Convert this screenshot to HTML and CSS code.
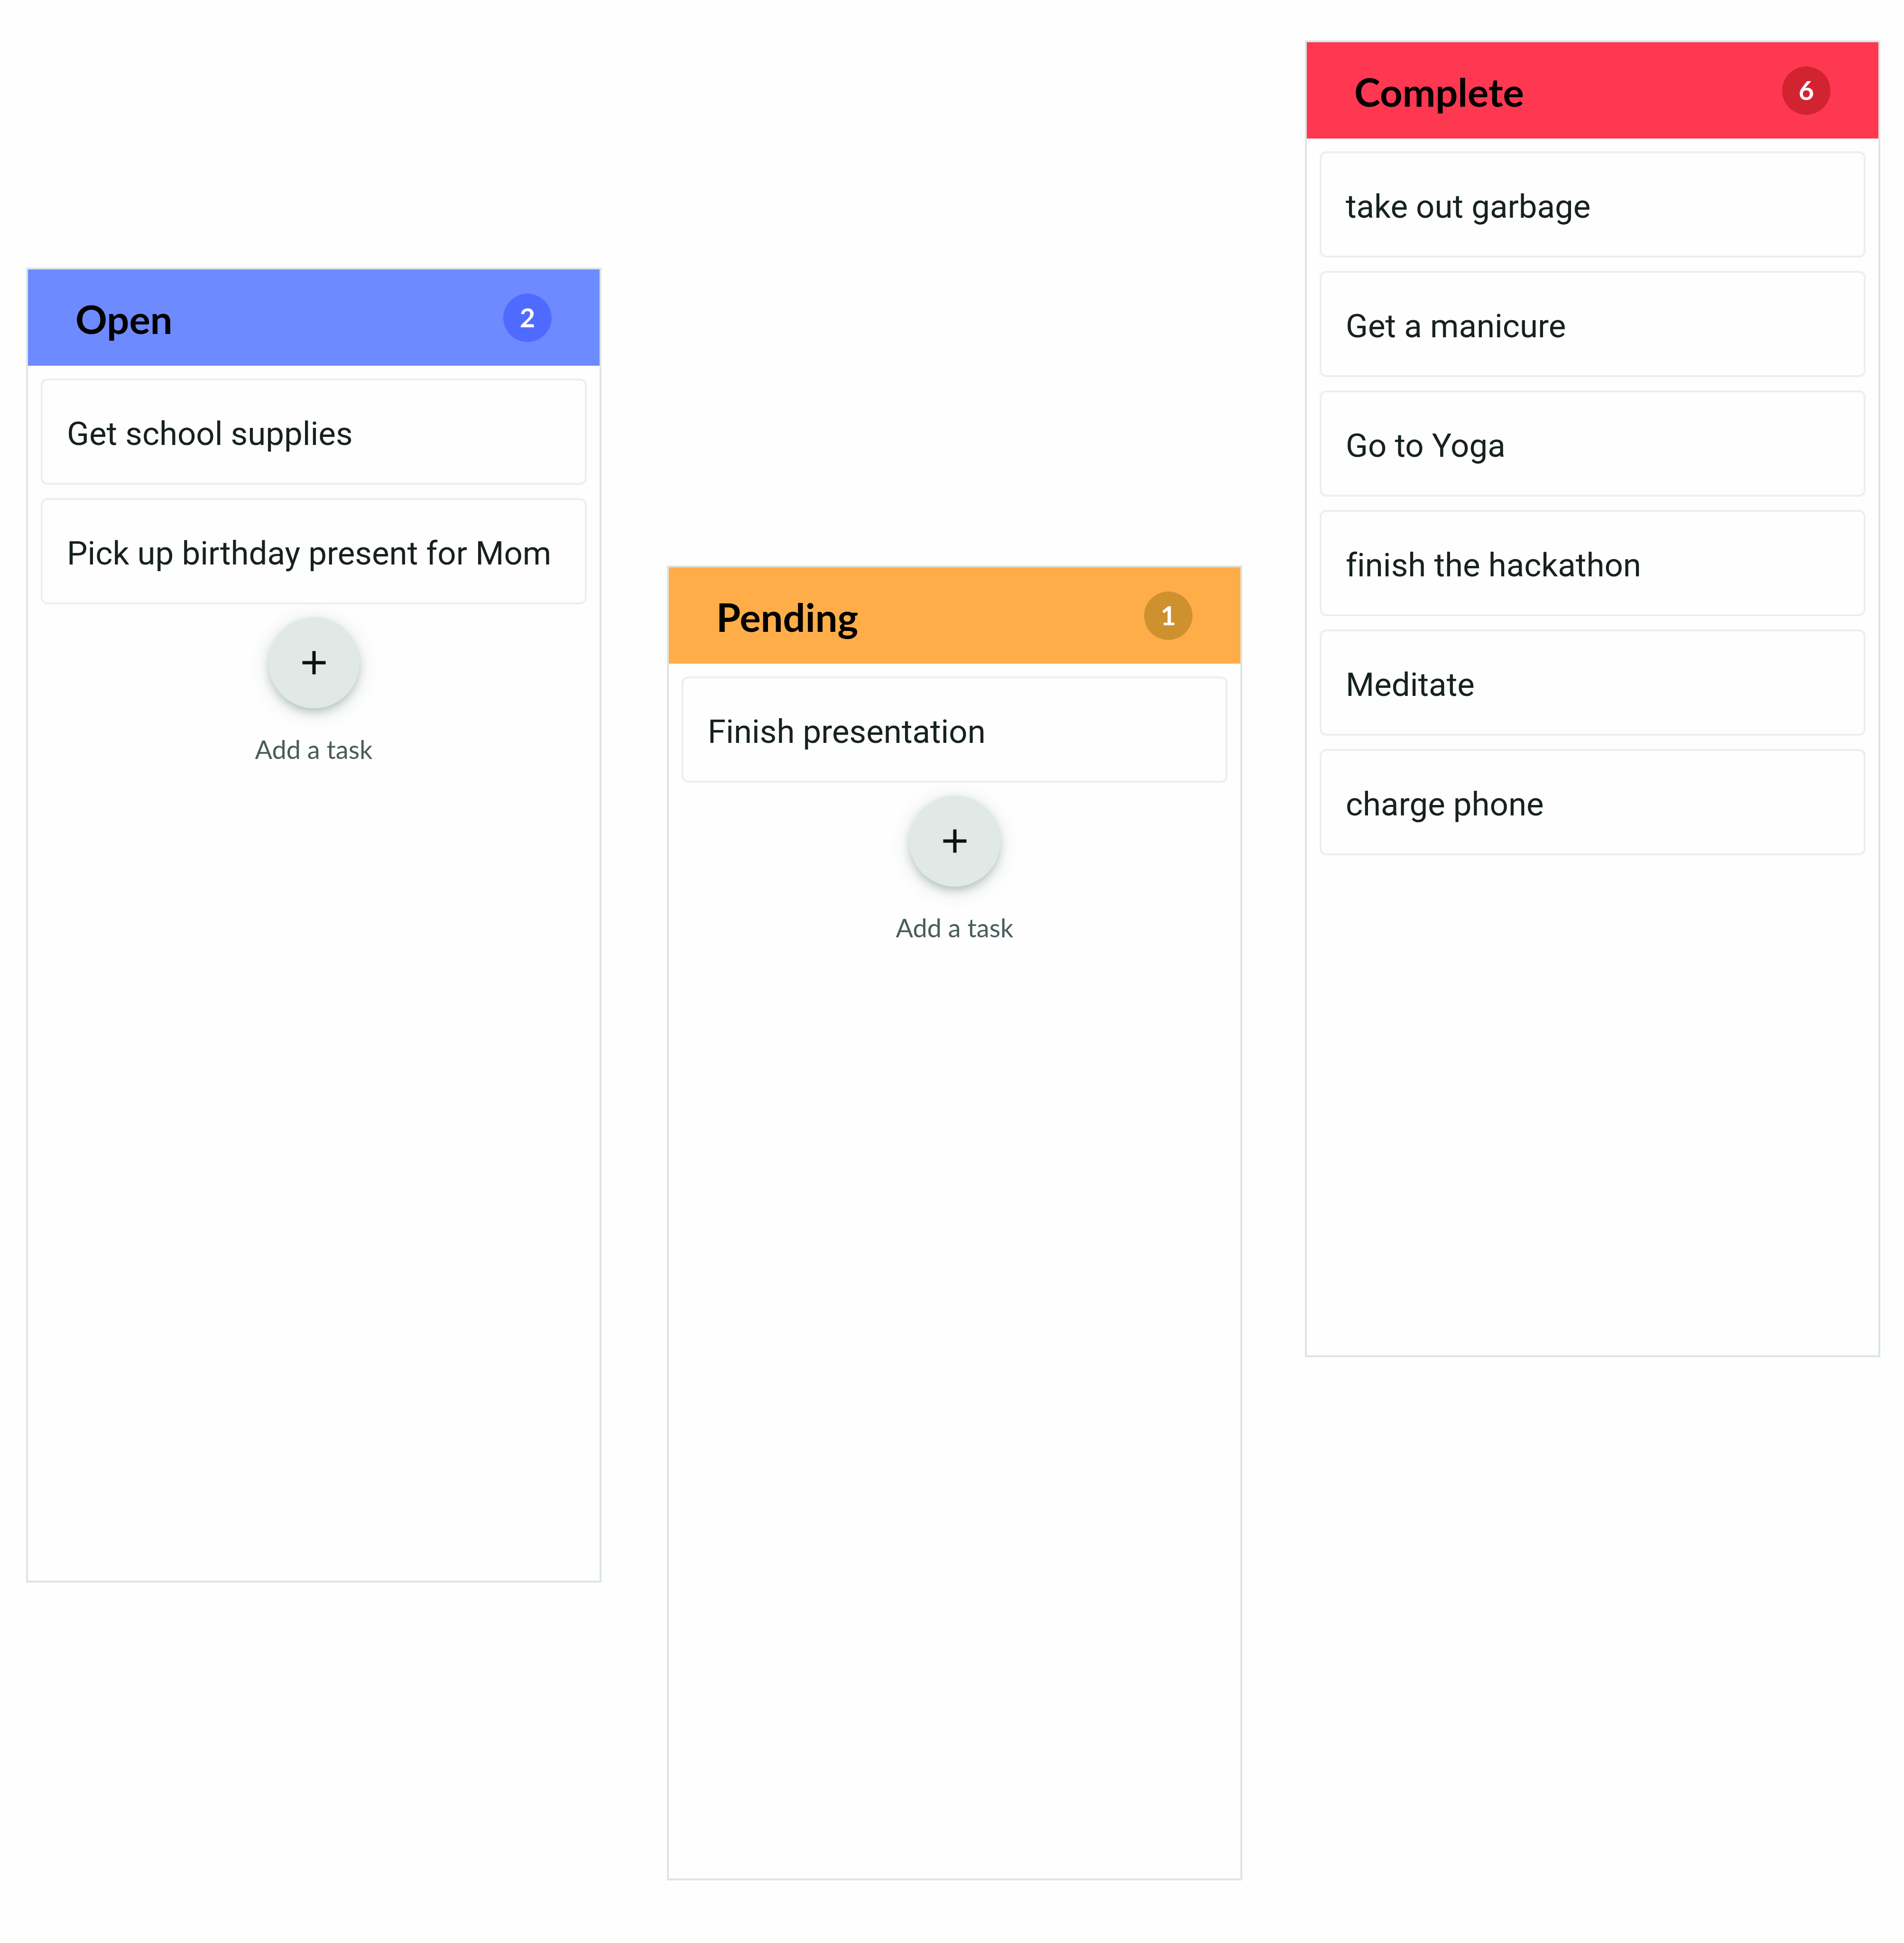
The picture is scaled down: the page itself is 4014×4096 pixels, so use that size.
FILE: index.html
```html
<!DOCTYPE html>
<html lang="en">
<head>
  <meta charset="utf-8">
  <title>Task board</title>
  <link rel="stylesheet" href="styles.css">
</head>
<body>
  <main class="board">
    <section class="column column--open">
      <header class="column__header">
        <h2 class="column__title">Open</h2>
        <span class="column__count">2</span>
      </header>
      <div class="column__body">
        <ul class="tasks">
          <li class="task">Get school supplies</li>
          <li class="task">Pick up birthday present for Mom</li>
        </ul>
        <div class="add">
          <button class="add__button" id="add-open" type="button">
            <svg class="add__icon" viewBox="0 0 24 24" aria-hidden="true"><path d="M19 13h-6v6h-2v-6H5v-2h6V5h2v6h6v2z"/></svg>
          </button>
          <label class="add__label" for="add-open">Add a task</label>
        </div>
      </div>
    </section>

    <section class="column column--pending">
      <header class="column__header">
        <h2 class="column__title">Pending</h2>
        <span class="column__count">1</span>
      </header>
      <div class="column__body">
        <ul class="tasks">
          <li class="task">Finish presentation</li>
        </ul>
        <div class="add">
          <button class="add__button" id="add-pending" type="button">
            <svg class="add__icon" viewBox="0 0 24 24" aria-hidden="true"><path d="M19 13h-6v6h-2v-6H5v-2h6V5h2v6h6v2z"/></svg>
          </button>
          <label class="add__label" for="add-pending">Add a task</label>
        </div>
      </div>
    </section>

    <section class="column column--complete">
      <header class="column__header">
        <h2 class="column__title">Complete</h2>
        <span class="column__count">6</span>
      </header>
      <div class="column__body">
        <ul class="tasks">
          <li class="task">take out garbage</li>
          <li class="task">Get a manicure</li>
          <li class="task">Go to Yoga</li>
          <li class="task">finish the hackathon</li>
          <li class="task">Meditate</li>
          <li class="task">charge phone</li>
        </ul>
      </div>
    </section>
  </main>
</body>
</html>
```
FILE: styles.css
```css
* {
  box-sizing: border-box;
}

body {
  margin: 0;
  background: #fefefe;
  color: #17211f;
  font-family: Roboto, "Liberation Sans", sans-serif;
  font-variant-ligatures: none;
}

.board {
  display: flex;
  align-items: flex-start;
  padding: 85px 50px 86px 55px;
}

.column {
  flex: 1 1 0;
  min-width: 0;
  min-height: 2772px;
  border: 4px solid #dce6e4;
}

.column--open {
  --header: #6e8aff;
  --count: #4f6bff;
  margin-top: 479px;
}

.column--pending {
  --header: #ffad49;
  --count: #cf9030;
  margin-top: 1107px;
  margin-left: 138px;
}

.column--complete {
  --header: #ff3852;
  --count: #d22430;
  min-height: 2776px;
  margin-left: 132px;
}

.column__header {
  display: flex;
  align-items: center;
  justify-content: space-between;
  height: 203px;
  padding: 0 101px 0 100px;
  background: var(--header);
}

.column__title {
  margin: 0;
  padding-top: 5px;
  color: #000;
  font: 700 83px/96px Lato, sans-serif;
}

.column__count {
  width: 102px;
  height: 102px;
  border-radius: 50%;
  background: var(--count);
  color: #fff;
  font: 700 56px/100px Lato, sans-serif;
  text-align: center;
}

.column__body {
  display: flex;
  flex-direction: column;
  gap: 27px;
  padding: 27px;
}

.tasks {
  display: flex;
  flex-direction: column;
  gap: 28px;
  margin: 0;
  padding: 0;
  list-style: none;
}

.task {
  padding: 71px 51px 61px;
  border: 4px solid #eaf0ee;
  border-radius: 14px;
  font-size: 69px;
  line-height: 84px;
}

.add {
  display: flex;
  flex-direction: column;
  align-items: center;
  gap: 53px;
}

.add__button {
  display: flex;
  align-items: center;
  justify-content: center;
  width: 192px;
  height: 192px;
  padding: 0;
  border: 0;
  border-radius: 50%;
  background: #e1e9e6;
  box-shadow: 0 10px 17px -3px rgba(60, 95, 85, 0.28), 0 8px 40px rgba(60, 95, 85, 0.2);
}

.add__icon {
  width: 84px;
  height: 84px;
  fill: #0c1110;
}

.add__label {
  color: #4a5c5c;
  font: 400 54px/68px Lato, sans-serif;
}
```
